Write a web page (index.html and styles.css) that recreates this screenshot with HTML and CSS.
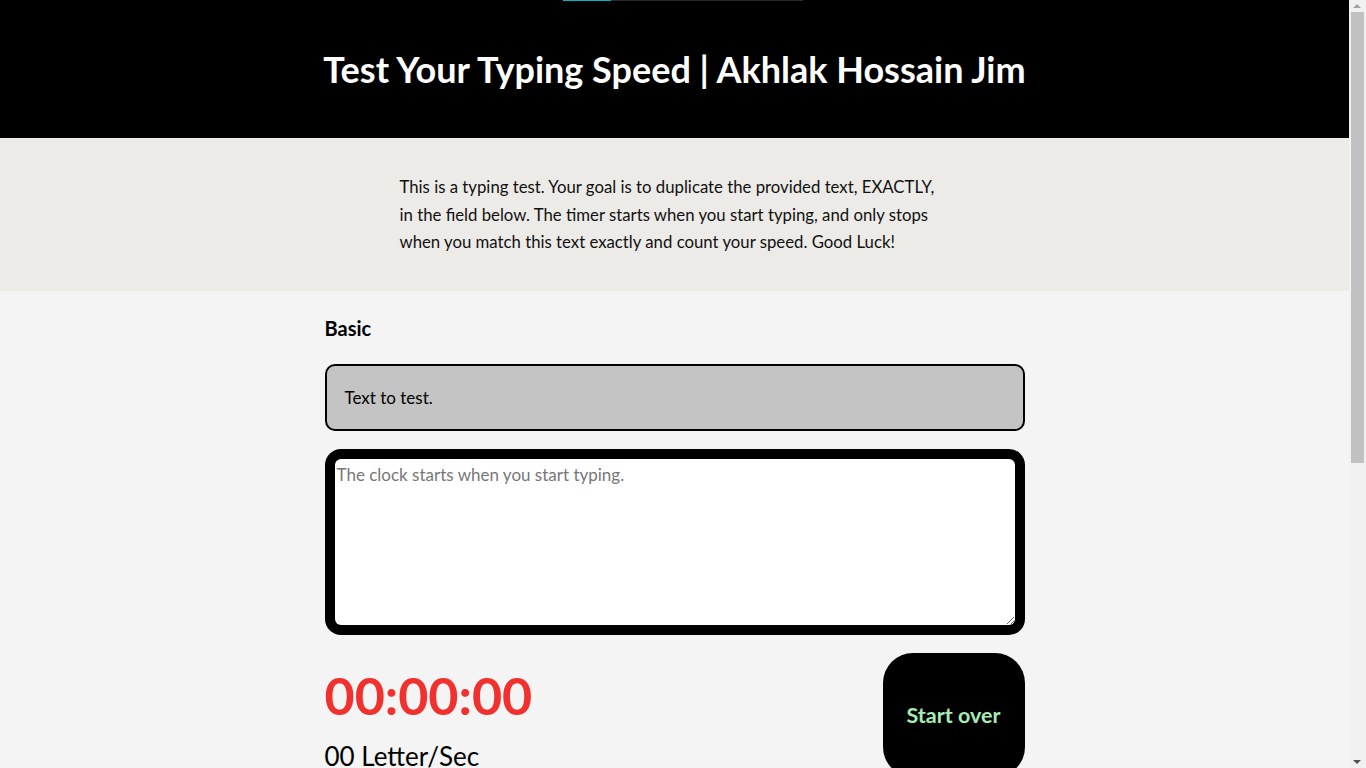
FILE: index.html
```html
<!DOCTYPE html>
<html lang="en">
<head>
<meta charset="utf-8">
<title>Test Your Typing Speed</title>
<link rel="stylesheet" href="styles.css">
</head>
<body>
<header class="masthead">
  <div class="progress"><div class="progress-fill" style="width:20%"></div></div>
  <h1 class="title">Test Your Typing Speed | Akhlak Hossain Jim</h1>
</header>
<section class="intro">
  <p class="intro-text">This is a typing test. Your goal is to duplicate the provided text, EXACTLY, in the field below. The timer starts when you start typing, and only stops when you match this text exactly and count your speed. Good Luck!</p>
</section>
<main class="main">
  <div class="wrap">
    <h3 class="level">Basic</h3>
    <div class="origin-text"><p>Text to test.</p></div>
    <div class="test-area">
      <textarea class="test-input" placeholder="The clock starts when you start typing."></textarea>
    </div>
    <div class="meta">
      <div class="stats">
        <div class="timer">00:00:00</div>
        <div class="speed">00 Letter/Sec</div>
      </div>
      <button class="reset">Start over</button>
    </div>
  </div>
</main>
<div class="scrollbar" aria-hidden="true">
  <span class="sb-arrow sb-up"></span>
  <span class="sb-thumb"></span>
  <span class="sb-arrow sb-down"></span>
</div>
</body>
</html>
```
FILE: styles.css
```css
html, body {
  margin: 0;
  padding: 0;
}
html {
  scrollbar-width: none;
}
html::-webkit-scrollbar {
  display: none;
}
body {
  margin-right: 17px;
  font-family: "Lato", "Open Sans", sans-serif;
  background: #f4f4f4;
  color: #000;
}
.masthead {
  position: relative;
  background: #000;
  height: 138px;
  display: flex;
  align-items: center;
  justify-content: center;
}
.progress {
  position: absolute;
  top: 0;
  left: 563px;
  width: 240px;
  height: 1px;
  background: #2a2a2a;
}
.progress-fill {
  height: 100%;
  background: #00b4c4;
}
.title {
  margin: 0;
  color: #fff;
  font-size: 36px;
  font-weight: 700;
}
.intro {
  background: #edebe7;
  padding: 35px 0 35px;
}
.intro-text {
  width: 550px;
  margin: 0 auto;
  font-size: 16.75px;
  line-height: 27.5px;
  color: #111;
}
.main {
  padding-bottom: 470px;
}
.wrap {
  width: 700px;
  margin: 0 auto;
  padding-top: 25px;
}
.level {
  margin: 0 0 24px;
  font-size: 20px;
  font-weight: 700;
  line-height: 24px;
}
.origin-text {
  background: #c4c4c4;
  border: 2px solid #000;
  border-radius: 10px;
  height: 63px;
  display: flex;
  align-items: center;
  padding: 0 18px;
}
.origin-text p {
  margin: 0;
  font-size: 17px;
}
.test-area {
  margin-top: 18px;
  border: 10px solid #000;
  border-radius: 16px;
  background: #000;
  height: 166px;
}
.test-input {
  display: block;
  width: 100%;
  height: 100%;
  box-sizing: border-box;
  border: none;
  border-radius: 6px;
  padding: 5px 2px;
  font-family: inherit;
  font-size: 17px;
  background: #fff;
  outline: none;
}
.test-input::placeholder {
  color: #777;
}
.meta {
  display: flex;
  justify-content: space-between;
  align-items: flex-start;
  margin-top: 18px;
}
.stats {
  padding-top: 10px;
}
.timer {
  font-size: 52px;
  font-weight: 700;
  color: #f0312e;
  line-height: 64px;
}
.speed {
  margin-top: 13px;
  font-size: 26px;
  line-height: 32px;
}
.reset {
  width: 142px;
  height: 124px;
  border: none;
  border-radius: 30px;
  background: #000;
  color: #a7ecb6;
  font-family: inherit;
  font-size: 21.5px;
  font-weight: 700;
}
.scrollbar {
  position: fixed;
  top: 0;
  right: 0;
  width: 17px;
  height: 100vh;
  background: #f1f1f1;
}
.sb-thumb {
  position: absolute;
  top: 12px;
  left: 2px;
  width: 13px;
  height: 451px;
  background: #c1c1c1;
}
.sb-arrow {
  position: absolute;
  left: 4px;
  width: 0;
  height: 0;
  border-left: 4.5px solid transparent;
  border-right: 4.5px solid transparent;
}
.sb-up {
  top: 4px;
  border-bottom: 4px solid #a3a3a3;
}
.sb-down {
  bottom: 4px;
  border-top: 4px solid #505050;
}
```
